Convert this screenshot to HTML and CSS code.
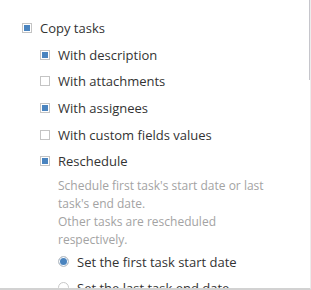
FILE: index.html
```html
<!DOCTYPE html>
<html lang="en">
<head>
  <meta charset="UTF-8">
  <title>Copy tasks</title>
  <link rel="stylesheet" href="styles.css">
</head>
<body>
  <div class="panel">
    <div class="options">
      <div class="row">
        <span class="check checked"></span>
        <span>Copy tasks</span>
      </div>
      <div class="sub">
        <div class="row">
          <span class="check checked"></span>
          <span>With description</span>
        </div>
        <div class="row">
          <span class="check"></span>
          <span>With attachments</span>
        </div>
        <div class="row">
          <span class="check checked"></span>
          <span>With assignees</span>
        </div>
        <div class="row">
          <span class="check"></span>
          <span>With custom fields values</span>
        </div>
        <div class="row">
          <span class="check checked"></span>
          <span>Reschedule</span>
        </div>
        <div class="sub">
          <p class="hint">Schedule first task's start date or last task's end date.<br>Other tasks are rescheduled respectively.</p>
          <div class="row radio-row">
            <span class="radio selected"></span>
            <span>Set the first task start date</span>
          </div>
          <div class="row radio-row">
            <span class="radio"></span>
            <span>Set the last task end date</span>
          </div>
        </div>
      </div>
    </div>
    <div class="scroll-thumb"></div>
  </div>
</body>
</html>
```

FILE: styles.css
```css
body {
  margin: 0;
  background-color: #fff;
  font-family: "Open Sans", Arial, sans-serif;
  font-size: 13px;
  color: #333;
}

.panel {
  position: relative;
  width: 310px;
  height: 288px;
  overflow: hidden;
  border-right: 1px solid #ececec;
  border-bottom: 2px solid #d2d2d2;
}

.options {
  padding: 15px 0 0 22px;
}

.sub {
  padding-left: 18px;
}

.row {
  display: flex;
  align-items: center;
  gap: 8px;
  height: 26.6px;
}

.radio-row {
  height: 26px;
}

.check {
  box-sizing: border-box;
  width: 10px;
  height: 10px;
  border: 1px solid #c4c4c4;
  background-color: #fff;
  flex-shrink: 0;
}

.check.checked {
  padding: 1px;
  background-color: #4a84bf;
  background-clip: content-box;
}

.radio {
  box-sizing: border-box;
  width: 11px;
  height: 11px;
  border: 1px solid #c8c8c8;
  border-radius: 50%;
  background-color: #fff;
  flex-shrink: 0;
}

.radio.selected {
  background-color: #4a84bf;
  box-shadow: inset 0 0 0 1px #fff;
}

.hint {
  margin: 2px 0 0;
  width: 220px;
  font-size: 12px;
  line-height: 18px;
  color: #a3a3a3;
}

.scroll-thumb {
  position: absolute;
  top: 0;
  right: 0;
  width: 1px;
  height: 80px;
  background-color: #c6c6cc;
}
```
